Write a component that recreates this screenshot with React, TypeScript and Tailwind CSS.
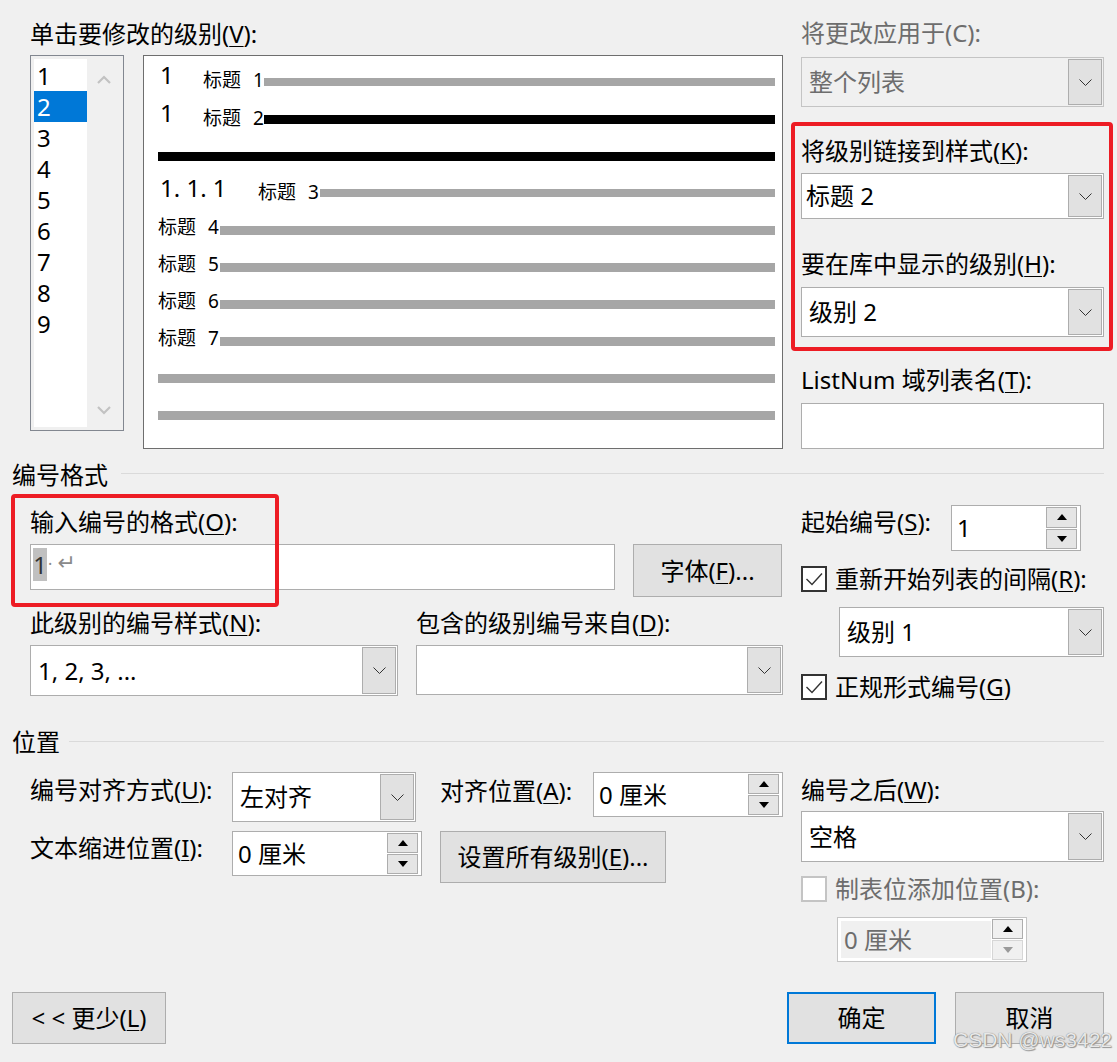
import React from "react";

const U = ({ c }: { c: string }) => (
  <span className="underline underline-offset-[3px] decoration-1">{c}</span>
);

const Chevron = () => (
  <svg width="13" height="7" viewBox="0 0 13 7">
    <path d="M0.5 0.5 L6.5 6.5 L12.5 0.5" fill="none" stroke="#333" strokeWidth="1" />
  </svg>
);

const TriUp = ({ color = "#000" }: { color?: string }) => (
  <svg width="10" height="6" viewBox="0 0 10 6">
    <polygon points="0,6 5,0 10,6" fill={color} />
  </svg>
);
const TriDown = ({ color = "#000" }: { color?: string }) => (
  <svg width="10" height="6" viewBox="0 0 10 6">
    <polygon points="0,0 10,0 5,6" fill={color} />
  </svg>
);

function Combo({
  className,
  text,
  disabled,
  pad = "pl-[7px]",
}: {
  className: string;
  text?: string;
  disabled?: boolean;
  pad?: string;
}) {
  return (
    <div
      className={`flex border ${
        disabled ? "border-[#c4c4c4] bg-[#f0f0f0] text-[#6d6d6d]" : "border-[#adadad] bg-white text-black"
      } ${className}`}
    >
      <div className={`flex-1 flex items-center text-[24px] leading-[30px] ${pad}`}>{text}</div>
      <div className="w-[34px] my-[1px] mr-[1px] bg-[#e1e1e1] border border-[#adadad] flex items-center justify-center">
        <Chevron />
      </div>
    </div>
  );
}

function Spin({ className, text, disabled }: { className: string; text: string; disabled?: boolean }) {
  if (disabled) {
    return (
      <div className={`flex border border-[#c4c4c4] bg-white p-[3px] ${className}`}>
        <div className="flex-1 flex items-center pl-[3px] bg-[#f0f0f0] text-[24px] leading-[30px] text-[#6d6d6d]">
          {text}
        </div>
        <div className="flex flex-col w-[31px] ml-[1px] -my-[2px] gap-[1px]">
          <div className="flex-1 bg-[#f0f0f0] border border-[#adadad] flex items-center justify-center">
            <TriUp />
          </div>
          <div className="flex-1 bg-[#f0f0f0] border border-[#d6d6d6] flex items-center justify-center">
            <TriDown color="#9a9a9a" />
          </div>
        </div>
      </div>
    );
  }
  return (
    <div className={`flex border border-[#adadad] bg-white ${className}`}>
      <div className="flex-1 flex items-center pl-[5px] text-[24px] leading-[30px]">{text}</div>
      <div className="flex flex-col w-[31px] my-[1px] mr-[3px] gap-[1px]">
        <div className="flex-1 bg-[#e5e5e5] border border-[#adadad] flex items-center justify-center">
          <TriUp />
        </div>
        <div className="flex-1 bg-[#e5e5e5] border border-[#adadad] flex items-center justify-center">
          <TriDown />
        </div>
      </div>
    </div>
  );
}

function Check({ disabled, checked }: { disabled?: boolean; checked?: boolean }) {
  return (
    <div
      className={`w-[26px] h-[26px] border-2 bg-white flex items-center justify-center ${
        disabled ? "border-[#c4c4c4]" : "border-[#333]"
      }`}
    >
      {checked && (
        <svg width="20" height="20" viewBox="0 0 20 20">
          <path d="M2.5 10 L8 15.5 L18 4.5" fill="none" stroke="#333" strokeWidth="1.4" />
        </svg>
      )}
    </div>
  );
}

function Btn({ className, children, primary }: { className: string; children: React.ReactNode; primary?: boolean }) {
  return (
    <div
      className={`flex items-center justify-center bg-[#e1e1e1] text-[24px] leading-[30px] whitespace-pre ${
        primary ? "border-2 border-[#0078d7]" : "border border-[#adadad]"
      } ${className}`}
    >
      {children}
    </div>
  );
}

const Label = ({ children, className = "" }: { children: React.ReactNode; className?: string }) => (
  <div className={`text-[24px] leading-[30px] whitespace-nowrap ${className}`}>{children}</div>
);

const Heading = ({ n, className }: { n: string; className: string }) => (
  <div className={`text-[19px] leading-[22px] whitespace-nowrap flex items-baseline ${className}`}>
    <span>标题</span>
    <span className="ml-[12px] text-[19px]">{n}</span>
  </div>
);

export default function App() {
  const levels = ["1", "2", "3", "4", "5", "6", "7", "8", "9"];
  return (
    <div className="relative w-[1117px] h-[1062px] overflow-hidden bg-[#f0f0f0] text-black font-['Noto_Sans','Noto_Sans_CJK_SC',sans-serif]">
      {/* Section A */}
      <div className="flex">
        <div className="ml-[30px] w-[753px] flex flex-col">
          <Label className="mt-[19px]">
            单击要修改的级别(<U c="V" />):
          </Label>
          <div className="flex items-start mt-[6px]">
            {/* level list */}
            <div className="w-[94px] h-[376px] border border-[#828790] bg-[#f0f0f0] p-[3px] flex">
              <div className="w-[53px] bg-white flex flex-col pt-[1px]">
                {levels.map((l) => (
                  <div
                    key={l}
                    className={`h-[31px] pl-[3px] text-[24px] leading-[31px] ${
                      l === "2" ? "bg-[#0078d7] text-white" : ""
                    }`}
                  >
                    {l}
                  </div>
                ))}
              </div>
              <div className="flex-1 flex flex-col items-center justify-between pt-[16px] pb-[12px]">
                <svg width="14" height="9" viewBox="0 0 14 9">
                  <path d="M1 8 L7 2 L13 8" fill="none" stroke="#c2c2c2" strokeWidth="2.2" />
                </svg>
                <svg width="14" height="9" viewBox="0 0 14 9">
                  <path d="M1 1 L7 7 L13 1" fill="none" stroke="#c2c2c2" strokeWidth="2.2" />
                </svg>
              </div>
            </div>
            {/* preview */}
            <div className="ml-[19px] w-[640px] h-[394px] border border-[#6e6e6e] bg-white pl-[14px] pr-[7px] flex flex-col">
              <div className="flex items-start mt-[6px] h-[30px]">
                <div className="w-[45px] pl-[2px] text-[24px] leading-[26px]">1</div>
                <Heading n="1" className="w-[61px] mt-[7px]" />
                <div className="flex-1 h-[8px] mt-[16px] bg-[#a6a6a6]" />
              </div>
              <div className="flex items-start mt-[8px] h-[30px]">
                <div className="w-[45px] pl-[2px] text-[24px] leading-[26px]">1</div>
                <Heading n="2" className="w-[61px] mt-[7px]" />
                <div className="flex-1 h-[9px] mt-[15px] bg-black" />
              </div>
              <div className="mt-[22px] h-[9px] bg-black" />
              <div className="flex items-start mt-[14px] h-[30px]">
                <div className="w-[100px] pl-[2px] text-[24px] leading-[26px] whitespace-pre">1. 1. 1</div>
                <Heading n="3" className="w-[62px] mt-[6px]" />
                <div className="flex-1 h-[8px] mt-[14px] bg-[#a6a6a6]" />
              </div>
              <div className="mt-[10px] flex flex-col">
                {["4", "5", "6", "7"].map((n) => (
                  <div key={n} className="flex items-start h-[37px]">
                    <Heading n={n} className="w-[62px] mt-[1px]" />
                    <div className="flex-1 h-[9px] mt-[11px] bg-[#a6a6a6]" />
                  </div>
                ))}
                <div className="h-[37px] pt-[11px]">
                  <div className="h-[9px] bg-[#a6a6a6]" />
                </div>
                <div className="h-[37px] pt-[11px]">
                  <div className="h-[9px] bg-[#a6a6a6]" />
                </div>
              </div>
            </div>
          </div>
        </div>
        <div className="ml-[18px] w-[303px] flex flex-col">
          <Label className="mt-[18px] text-[#6d6d6d]">将更改应用于(C):</Label>
          <Combo className="mt-[9px] w-[303px] h-[50px]" text="整个列表" disabled />
          <Label className="mt-[29px]">
            将级别链接到样式(<U c="K" />):
          </Label>
          <Combo className="mt-[7px] w-[303px] h-[46px]" text="标题 2" pad="pl-[4px]" />
          <Label className="mt-[30px]">
            要在库中显示的级别(<U c="H" />):
          </Label>
          <Combo className="mt-[8px] w-[303px] h-[50px]" text="级别 2" />
          <Label className="mt-[28px]">
            ListNum 域列表名(<U c="T" />):
          </Label>
          <div className="mt-[8px] w-[303px] h-[46px] border border-[#adadad] bg-white" />
        </div>
      </div>

      {/* 编号格式 header */}
      <div className="flex items-start h-[30px] mt-[11px] pl-[12px] pr-[13px]">
        <Label>编号格式</Label>
        <div className="flex-1 h-[1px] mt-[13px] ml-[13px] bg-[#dadada]" />
      </div>

      {/* Section B */}
      <div className="flex items-start">
        <div className="ml-[30px] w-[753px] flex flex-col">
          <Label className="mt-[17px]">
            输入编号的格式(<U c="O" />):
          </Label>
          <div className="flex items-start mt-[7px]">
            <div className="w-[585px] h-[46px] border border-[#adadad] bg-white flex items-start pt-[3px] pl-[2px]">
              <span className="w-[14px] h-[33px] bg-[#c0c0c0] text-[#333] text-[24px] leading-[33px] flex justify-center">
                1
              </span>
              <span className="ml-[1px] text-[#8a8a8a] text-[16px] leading-[33px]">·</span>
              <span className="ml-[5px] text-[#8a8a8a] text-[22px] leading-[30px] font-['DejaVu_Sans',sans-serif]">
                ↵
              </span>
            </div>
            <Btn className="ml-[18px] w-[149px] h-[53px]">
              字体(<U c="F" />)...
            </Btn>
          </div>
          <div className="flex mt-[11px]">
            <Label className="w-[386px]">
              此级别的编号样式(<U c="N" />):
            </Label>
            <Label>
              包含的级别编号来自(<U c="D" />):
            </Label>
          </div>
          <div className="flex items-start mt-[7px]">
            <Combo className="w-[368px] h-[51px]" text="1, 2, 3, ..." />
            <Combo className="ml-[18px] w-[367px] h-[50px]" text="" />
          </div>
        </div>
        <div className="ml-[18px] w-[303px] flex flex-col">
          <div className="flex items-start mt-[15px]">
            <Label className="w-[150px] mt-[2px]">
              起始编号(<U c="S" />):
            </Label>
            <Spin className="w-[130px] h-[46px]" text="1" />
          </div>
          <div className="flex items-center h-[26px] mt-[15px]">
            <Check checked />
            <Label className="ml-[8px]">
              重新开始列表的间隔(<U c="R" />):
            </Label>
          </div>
          <Combo className="mt-[15px] ml-[38px] w-[265px] h-[50px]" text="级别 1" />
          <div className="flex items-center h-[26px] mt-[17px]">
            <Check checked />
            <Label className="ml-[8px]">
              正规形式编号(<U c="G" />)
            </Label>
          </div>
        </div>
      </div>

      {/* 位置 header */}
      <div className="flex items-start h-[30px] mt-[27px] pl-[12px] pr-[13px]">
        <Label>位置</Label>
        <div className="flex-1 h-[1px] mt-[14px] ml-[9px] bg-[#dadada]" />
      </div>

      {/* Section C */}
      <div className="flex items-start">
        <div className="ml-[30px] w-[202px] flex flex-col">
          <Label className="mt-[18px]">
            编号对齐方式(<U c="U" />):
          </Label>
          <Label className="mt-[28px]">
            文本缩进位置(<U c="I" />):
          </Label>
        </div>
        <div className="w-[190px] flex flex-col">
          <Combo className="mt-[15px] w-[184px] h-[50px]" text="左对齐" />
          <Spin className="mt-[9px] w-[190px] h-[45px]" text="0 厘米" />
        </div>
        <div className="ml-[18px] w-[343px] flex flex-col">
          <div className="flex items-start mt-[15px]">
            <Label className="w-[153px] mt-[4px]">
              对齐位置(<U c="A" />):
            </Label>
            <Spin className="w-[190px] h-[45px]" text="0 厘米" />
          </div>
          <Btn className="mt-[14px] w-[226px] h-[52px]">
            设置所有级别(<U c="E" />)...
          </Btn>
        </div>
        <div className="ml-[18px] w-[303px] flex flex-col">
          <Label className="mt-[18px]">
            编号之后(<U c="W" />):
          </Label>
          <Combo className="mt-[6px] w-[303px] h-[51px]" text="空格" />
          <div className="flex items-center h-[26px] mt-[14px]">
            <Check disabled />
            <Label className="ml-[8px] text-[#6d6d6d]">制表位添加位置(B):</Label>
          </div>
          <Spin className="mt-[15px] ml-[36px] w-[190px] h-[45px]" text="0 厘米" disabled />
        </div>
      </div>

      {/* Bottom buttons */}
      <div className="flex items-start mt-[30px]">
        <Btn className="ml-[12px] w-[154px] h-[52px]">
          {"< < 更少("}
          <U c="L" />)
        </Btn>
        <div className="ml-auto mr-[13px] flex">
          <Btn primary className="w-[149px] h-[52px]">
            确定
          </Btn>
          <Btn className="ml-[19px] w-[149px] h-[52px]">取消</Btn>
        </div>
      </div>

      {/* red highlight boxes */}
      <div className="absolute left-[791px] top-[122px] w-[322px] h-[229px] border-[4px] border-[#ed1c24] rounded-[4px] pointer-events-none" />
      <div className="absolute left-[11px] top-[494px] w-[268px] h-[113px] border-[4px] border-[#ed1c24] rounded-[4px] pointer-events-none" />

      {/* watermark */}
      <div className="absolute left-[953px] top-[1028px] text-[21px] leading-[24px] text-[#e8e8e8] font-['Liberation_Sans',sans-serif] whitespace-nowrap [text-shadow:0_0_1px_#6a6a6a,1px_1px_1px_#9a9a9a]">
        CSDN @ws3422
      </div>
    </div>
  );
}
